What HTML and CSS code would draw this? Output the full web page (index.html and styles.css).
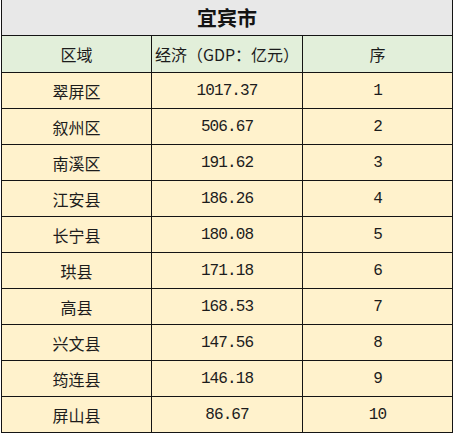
FILE: index.html
```html
<!DOCTYPE html>
<html lang="zh">
<head>
<meta charset="utf-8">
<link rel="stylesheet" href="styles.css">
</head>
<body>
<div class="sheet">
  <div class="cell title">宜宾市</div>
  <div class="cell head">区域</div>
  <div class="cell head">经济（GDP：亿元）</div>
  <div class="cell head">序</div>

  <div class="cell">翠屏区</div><div class="cell num">1017.37</div><div class="cell num">1</div>
  <div class="cell">叙州区</div><div class="cell num">506.67</div><div class="cell num">2</div>
  <div class="cell">南溪区</div><div class="cell num">191.62</div><div class="cell num">3</div>
  <div class="cell">江安县</div><div class="cell num">186.26</div><div class="cell num">4</div>
  <div class="cell">长宁县</div><div class="cell num">180.08</div><div class="cell num">5</div>
  <div class="cell">珙县</div><div class="cell num">171.18</div><div class="cell num">6</div>
  <div class="cell">高县</div><div class="cell num">168.53</div><div class="cell num">7</div>
  <div class="cell">兴文县</div><div class="cell num">147.56</div><div class="cell num">8</div>
  <div class="cell">筠连县</div><div class="cell num">146.18</div><div class="cell num">9</div>
  <div class="cell">屏山县</div><div class="cell num">86.67</div><div class="cell num">10</div>
</div>
</body>
</html>
```
FILE: styles.css
```css
html, body {
  margin: 0;
  padding: 0;
  background: #ffffff;
}
.sheet {
  margin-left: 1px;
  width: 450px;
  display: grid;
  grid-template-columns: 149px 150px 149px;
  grid-template-rows: 35px 36px repeat(10, 35px);
  gap: 1px;
  padding: 0 1px 1px 1px;
  background: #141414;
  font-family: "Noto Sans CJK SC", "Noto Sans", sans-serif;
  color: #1c1c1c;
}
.cell {
  background: #fff2cc;
  display: flex;
  align-items: center;
  justify-content: center;
  font-size: 16px;
  white-space: nowrap;
  overflow: visible;
}
.title {
  grid-column: 1 / 4;
  background: #e8e8e8;
  font-size: 20px;
  font-weight: 700;
  color: #141414;
}
.head {
  background: #e2efda;
}
.num {
  font-family: "Liberation Mono", monospace;
  font-size: 16px;
  letter-spacing: -0.9px;
  padding-top: 1px;
}
```
